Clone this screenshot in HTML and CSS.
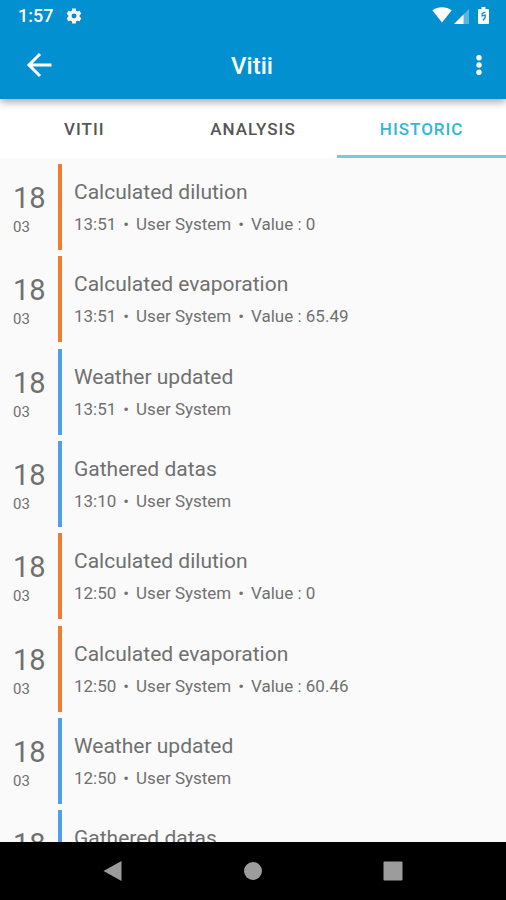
FILE: index.html
```html
<!DOCTYPE html>
<html lang="en">
<head>
<meta charset="utf-8">
<meta name="viewport" content="width=device-width, initial-scale=1">
<title>Vitii</title>
<link rel="stylesheet" href="styles.css">
</head>
<body>
<header class="header">
  <div class="status">
    <span class="clock">1:57</span>
    <svg class="gear" width="18" height="18" viewBox="0 0 24 24" aria-hidden="true"><path fill="#fff" fill-rule="evenodd" d="M19.4 13c.1-.3.1-.7.1-1s0-.7-.1-1l2.1-1.700c.2-.1.3-.4.1-.6l-2-3.500c-.1-.2-.4-.3-.6-.2l-2.500 1c-.5-.4-1.100-.7-1.700-1l-.4-2.600c0-.3-.2-.4-.4-.4h-4c-.3 0-.5.100-.5.400L9.100 5c-.6.300-1.200.6-1.700 1l-2.500-1c-.2-.1-.5 0-.6.200l-2 3.500c-.1.200-.1.500.1.600L4.500 11c0 .3-.1.700-.1 1s0 .7.100 1l-2.100 1.700c-.2.100-.3.400-.1.600l2 3.500c.1.200.4.300.6.200l2.500-1c.5.400 1.100.7 1.700 1l.4 2.600c0 .2.200.4.500.4h4c.2 0 .4-.2.400-.4l.4-2.600c.6-.3 1.200-.6 1.700-1l2.500 1c.2.100.5 0 .6-.2l2-3.500c.1-.2.100-.5-.1-.6zM12 15.300a3.300 3.300 0 1 1 0-6.600 3.300 3.300 0 0 1 0 6.600z"/></svg>
    <svg class="wifi" width="20" height="18" viewBox="0 0 20 18" aria-hidden="true"><path fill="#fff" d="M10 15.500L.3 3.300C3 1.200 6.400.2 10 .2s7 1 9.700 3.100z"/></svg>
    <svg class="signal" width="16" height="16" viewBox="0 0 16 16" aria-hidden="true"><path fill="#fff" opacity=".35" d="M15 1v15H0z"/><path fill="#fff" d="M9.500 6.500V16H0z"/></svg>
    <svg class="battery" width="11" height="18" viewBox="0 0 11 18" aria-hidden="true"><path fill="#fff" d="M3.500 0h4v2H10q1 0 1 1v13q0 1-1 1H1q-1 0-1-1V3q0-1 1-1h2.500z"/><path fill="none" stroke="#0290d1" stroke-width="1.300" d="M7.500 5L4.200 6.500V9l3-.8V10.500L5 13.500"/></svg>
  </div>
  <div class="appbar">
    <button class="icon-button" type="button" aria-label="Back">
      <svg width="26" height="26" viewBox="0 0 26 26" aria-hidden="true"><path fill="none" stroke="#fff" stroke-width="3" d="M25.500 12H3M14 1L3 12l11 11"/></svg>
    </button>
    <h1 class="title">Vitii</h1>
    <button class="icon-button more" type="button" aria-label="More options">
      <svg width="6" height="22" viewBox="0 0 6 22" aria-hidden="true"><g fill="#fff"><circle cx="3" cy="2.700" r="2.700"/><circle cx="3" cy="10" r="2.700"/><circle cx="3" cy="17.300" r="2.700"/></g></svg>
    </button>
  </div>
</header>
<nav class="tabs">
  <a class="tab" href="#vitii">VITII</a>
  <a class="tab" href="#analysis">ANALYSIS</a>
  <a class="tab active" href="#historic" aria-current="page">HISTORIC</a>
</nav>
<main class="content">
  <ul class="events">
    <li class="event computed"><div class="date"><span class="day">18</span><span class="month">03</span></div><div class="body"><h2 class="name">Calculated dilution</h2><p class="meta"><span>13:51</span><span class="dot">•</span><span>User System</span><span class="dot">•</span><span>Value : 0</span></p></div></li>
    <li class="event computed"><div class="date"><span class="day">18</span><span class="month">03</span></div><div class="body"><h2 class="name">Calculated evaporation</h2><p class="meta"><span>13:51</span><span class="dot">•</span><span>User System</span><span class="dot">•</span><span>Value : 65.49</span></p></div></li>
    <li class="event"><div class="date"><span class="day">18</span><span class="month">03</span></div><div class="body"><h2 class="name">Weather updated</h2><p class="meta"><span>13:51</span><span class="dot">•</span><span>User System</span></p></div></li>
    <li class="event"><div class="date"><span class="day">18</span><span class="month">03</span></div><div class="body"><h2 class="name">Gathered datas</h2><p class="meta"><span>13:10</span><span class="dot">•</span><span>User System</span></p></div></li>
    <li class="event computed"><div class="date"><span class="day">18</span><span class="month">03</span></div><div class="body"><h2 class="name">Calculated dilution</h2><p class="meta"><span>12:50</span><span class="dot">•</span><span>User System</span><span class="dot">•</span><span>Value : 0</span></p></div></li>
    <li class="event computed"><div class="date"><span class="day">18</span><span class="month">03</span></div><div class="body"><h2 class="name">Calculated evaporation</h2><p class="meta"><span>12:50</span><span class="dot">•</span><span>User System</span><span class="dot">•</span><span>Value : 60.46</span></p></div></li>
    <li class="event"><div class="date"><span class="day">18</span><span class="month">03</span></div><div class="body"><h2 class="name">Weather updated</h2><p class="meta"><span>12:50</span><span class="dot">•</span><span>User System</span></p></div></li>
    <li class="event"><div class="date"><span class="day">18</span></div><div class="body"><h2 class="name">Gathered datas</h2></div></li>
  </ul>
</main>
<footer class="system-nav">
  <button class="icon-button" type="button" aria-label="System back"><svg width="22" height="22" viewBox="0 0 22 22" aria-hidden="true"><path fill="#9c9c9c" d="M19.500 1v20L1.500 11z"/></svg></button>
  <button class="icon-button" type="button" aria-label="Home"><svg width="22" height="22" viewBox="0 0 22 22" aria-hidden="true"><circle cx="11" cy="11" r="9" fill="#9c9c9c"/></svg></button>
  <button class="icon-button" type="button" aria-label="Recent apps"><svg width="22" height="22" viewBox="0 0 22 22" aria-hidden="true"><rect x="1.500" y="1.500" width="19" height="19" rx="1" fill="#9c9c9c"/></svg></button>
</footer>
</body>
</html>
```

FILE: styles.css
```css
* {
  box-sizing: border-box;
}

body {
  margin: 0;
  height: 100vh;
  display: flex;
  flex-direction: column;
  overflow: hidden;
  background: #fafafa;
  color: #707070;
  font-family: Roboto, sans-serif;
}

.header {
  position: relative;
  z-index: 1;
  flex: none;
  background: #0290d1;
  color: #fff;
  box-shadow: 0 3px 8px rgba(0, 0, 0, 0.35);
}

.status {
  display: flex;
  align-items: center;
  height: 32px;
  padding: 0 17px 0 18px;
}

.clock {
  font-size: 18px;
  font-weight: 500;
  line-height: 32px;
}

.gear {
  margin-left: 12px;
}

.wifi {
  margin-left: auto;
}

.signal {
  margin: 0 8px 0 2px;
}

.appbar {
  display: grid;
  grid-template-columns: 1fr auto 1fr;
  align-items: center;
  height: 67px;
  padding: 0 24px 0 26px;
}

.icon-button {
  display: flex;
  justify-self: start;
  padding: 0;
  border: 0;
  background: none;
}

.more {
  justify-self: end;
}

.title {
  margin: 0;
  padding-right: 4px;
  font-size: 24px;
  font-weight: 500;
  line-height: 32px;
}

.tabs {
  display: grid;
  grid-template-columns: repeat(3, 1fr);
  flex: none;
  height: 59px;
  background: #fff;
}

.tab {
  color: #555;
  font-size: 17px;
  font-weight: 500;
  letter-spacing: 1px;
  line-height: 60px;
  height: 59px;
  text-align: center;
  text-decoration: none;
}

.active {
  box-shadow: inset 0 -3px #82c5df;
  color: #32b7d8;
}

.content {
  flex: 1;
  min-height: 0;
  overflow: hidden;
}

.events {
  margin: 0;
  padding: 6px 0 0;
  list-style: none;
}

.event {
  display: grid;
  grid-template-columns: 58px 1fr;
  height: 86px;
  margin-bottom: 6px;
}

.event:nth-child(3n + 2) {
  margin-bottom: 7px;
}

.date {
  display: flex;
  flex-direction: column;
  padding: 16px 0 0 13px;
}

.day {
  font-size: 29px;
  line-height: 36px;
}

.month {
  font-size: 15px;
  line-height: 22px;
}

.body {
  padding: 14px 0 0 12px;
  border-left: 4px solid #4f9fec;
}

.computed .body {
  border-color: #f37b2d;
}

.name {
  margin: 0;
  font-size: 21px;
  font-weight: 400;
  line-height: 28px;
}

.meta {
  display: flex;
  margin: 0;
  padding-top: 6px;
  font-size: 17px;
  line-height: 24px;
}

.dot {
  margin: 0 7px;
}

.system-nav {
  display: flex;
  align-items: center;
  justify-content: center;
  gap: 118px;
  flex: none;
  height: 58px;
  background: #000;
}
```
